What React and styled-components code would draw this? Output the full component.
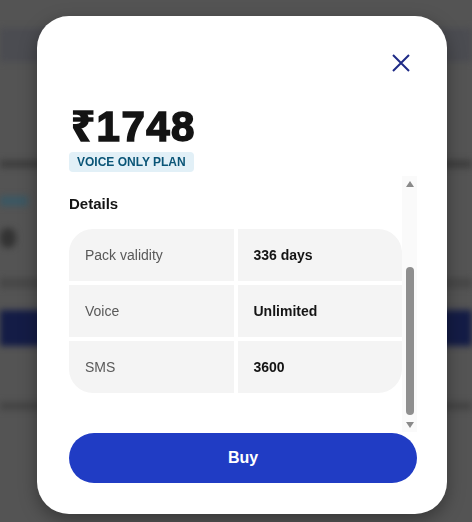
import React, { useLayoutEffect, useRef, useState } from "react";
import styled, { createGlobalStyle } from "styled-components";

const GlobalStyle = createGlobalStyle`
  html, body {
    margin: 0;
    height: 100%;
  }
  body {
    background: #545454;
    font-family: "Liberation Sans", Arial, sans-serif;
    overflow: hidden;
  }
`;

// blurred page that sits behind the modal
const Page = styled.div`
  height: 522px;
  display: flex;
  flex-direction: column;
  filter: blur(3px);
`;

const Band = styled.div`
  margin-top: ${(p) => p.$top}px;
  height: ${(p) => p.$h}px;
  width: ${(p) => p.$w || "100%"};
  background: ${(p) => p.$c};
  border-radius: ${(p) => p.$r || 0}px;
`;

const Overlay = styled.div`
  position: fixed;
  inset: 0;
  display: flex;
  align-items: flex-start;
  padding: 16px 0 0 37px;
`;

const Card = styled.div`
  width: 410px;
  height: 498px;
  box-sizing: border-box;
  padding: 35px 30px 31px 32px;
  background: #fff;
  border-radius: 32px;
  box-shadow: 0 6px 18px rgba(0, 0, 0, 0.35);
  display: flex;
  flex-direction: column;
`;

const CloseRow = styled.div`
  display: flex;
  justify-content: flex-end;
  padding-right: 4px;
`;

const CloseButton = styled.button`
  width: 24px;
  height: 24px;
  padding: 0;
  border: 0;
  background: none;
  color: #1e2a86;
  display: flex;
  cursor: pointer;
`;

const Price = styled.div`
  margin-top: 28px;
  padding-left: 2px;
  font-family: "Liberation Sans", "Noto Sans", sans-serif;
  font-size: 42px;
  line-height: 48px;
  font-weight: 700;
  color: #141414;
  -webkit-text-stroke: 1.6px #141414;
  letter-spacing: 1.5px;
`;

const Tag = styled.span`
  align-self: flex-start;
  margin-top: 1px;
  padding: 0 8px;
  height: 20px;
  line-height: 20px;
  border-radius: 4px;
  background: #e2f0f7;
  color: #0a5577;
  font-size: 12px;
  font-weight: 700;
`;

const Scroller = styled.div`
  margin-top: 4px;
  height: 256px;
  display: flex;
`;

const Viewport = styled.div`
  flex: 1;
  overflow-y: scroll;
  scrollbar-width: none;
  &::-webkit-scrollbar {
    display: none;
  }
`;

const Rail = styled.div`
  width: 15px;
  background: #fafafa;
  display: flex;
  flex-direction: column;
`;

const Arrow = styled.div`
  height: 15px;
  display: flex;
  align-items: ${(p) => (p.$down ? "flex-start" : "flex-end")};
  justify-content: center;
  &::after {
    content: "";
    margin: ${(p) => (p.$down ? "5px 0 0" : "0 0 4px")};
    border-left: 4.5px solid transparent;
    border-right: 4.5px solid transparent;
    ${(p) => (p.$down ? "border-top" : "border-bottom")}: 6px solid #8a8a8a;
  }
`;

const Track = styled.div`
  flex: 1;
  display: flex;
  flex-direction: column;
  align-items: center;
`;

const Thumb = styled.div`
  width: 8px;
  border-radius: 4px;
  background: #8f8f8f;
`;

// the part above "Details" is already scrolled out of view
const ScrollBody = styled.div`
  padding: 153px 0 39px;
  display: flex;
  flex-direction: column;
`;

const Section = styled.section`
  display: flex;
  flex-direction: column;
  gap: 15px;
`;

const Title = styled.h3`
  margin: 0;
  font-size: 15px;
  line-height: 20px;
  font-weight: 700;
  color: #141414;
`;

const Table = styled.div`
  display: grid;
  grid-template-columns: 1fr 1fr;
  gap: 4px;
  border-radius: 24px;
  overflow: hidden;
`;

const Cell = styled.div`
  height: 52px;
  display: flex;
  align-items: center;
  padding: 0 16px;
  background: #f4f4f4;
  font-size: 14px;
  font-weight: ${(p) => (p.$value ? 700 : 400)};
  color: ${(p) => (p.$value ? "#141414" : "#595959")};
`;

const BuyButton = styled.button`
  margin-top: 1px;
  height: 50px;
  border: 0;
  border-radius: 25px;
  background: #203cc4;
  color: #fff;
  font-family: inherit;
  font-size: 16px;
  font-weight: 700;
  cursor: pointer;
`;

const details = [
  ["Pack validity", "336 days"],
  ["Voice", "Unlimited"],
  ["SMS", "3600"],
];

const InfoTable = ({ rows }) => (
  <Table>
    {rows.map(([label, value]) => (
      <React.Fragment key={label}>
        <Cell>{label}</Cell>
        <Cell $value>{value}</Cell>
      </React.Fragment>
    ))}
  </Table>
);

const TRACK = 226;

export default function App() {
  const scrollRef = useRef(null);
  const [thumb, setThumb] = useState({ top: 0, size: TRACK });

  useLayoutEffect(() => {
    const el = scrollRef.current;
    if (!el) return;
    el.scrollTop = el.scrollHeight;
    const size = Math.round((TRACK * el.clientHeight) / el.scrollHeight);
    const max = el.scrollHeight - el.clientHeight;
    const top = max > 0 ? Math.round(((TRACK - size) * el.scrollTop) / max) : 0;
    setThumb({ top: top - 2, size });
  }, []);

  return (
    <>
      <GlobalStyle />
      <Page>
        <Band $top={28} $h={34} $c="#4b4c51" />
        <Band $top={98} $h={8} $c="#3e3e3e" />
        <Band $top={28} $h={10} $w="28px" $c="#3b5763" />
        <Band $top={22} $h={20} $w="16px" $c="#333" $r={10} />
        <Band $top={30} $h={10} $c="#474747" />
        <Band $top={22} $h={36} $c="#141c46" />
        <Band $top={56} $h={8} $c="#444" />
      </Page>

      <Overlay>
        <Card>
          <CloseRow>
            <CloseButton aria-label="Close">
              <svg width="24" height="24" viewBox="0 0 24 24" fill="none">
                <path
                  d="M4 4L20 20M20 4L4 20"
                  stroke="currentColor"
                  strokeWidth="2"
                />
              </svg>
            </CloseButton>
          </CloseRow>

          <Price>₹1748</Price>
          <Tag>VOICE ONLY PLAN</Tag>

          <Scroller>
            <Viewport ref={scrollRef}>
              <ScrollBody>
                <Section>
                  <Title>Details</Title>
                  <InfoTable rows={details} />
                </Section>
              </ScrollBody>
            </Viewport>
            <Rail>
              <Arrow />
              <Track>
                <Thumb style={{ marginTop: thumb.top, height: thumb.size }} />
              </Track>
              <Arrow $down />
            </Rail>
          </Scroller>

          <BuyButton>Buy</BuyButton>
        </Card>
      </Overlay>
    </>
  );
}
